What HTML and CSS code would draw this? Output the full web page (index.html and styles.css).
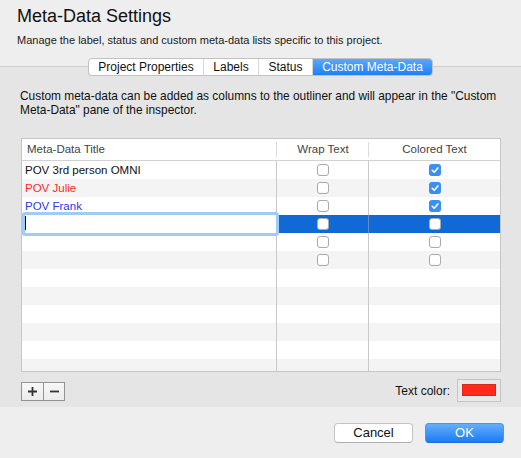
FILE: index.html
```html
<!DOCTYPE html>
<html>
<head>
<meta charset="utf-8">
<link rel="stylesheet" href="styles.css">
</head>
<body>
<div class="window">
  <header class="head">
    <h1 class="title">Meta-Data Settings</h1>
    <p class="subtitle">Manage the label, status and custom meta-data lists specific to this project.</p>
  </header>
  <div class="tabrow">
    <div class="tabs">
      <div class="tab tab-props">Project Properties</div>
      <div class="tab tab-labels">Labels</div>
      <div class="tab tab-status">Status</div>
      <div class="tab tab-custom active">Custom Meta-Data</div>
    </div>
  </div>
  <main class="panel">
    <p class="desc">Custom meta-data can be added as columns to the outliner and will appear in the "Custom Meta-Data" pane of the inspector.</p>
    <div class="table">
      <div class="thead">
        <div class="hcell hleft">Meta-Data Title</div>
        <div class="hcell">Wrap Text</div>
        <div class="hcell hlast">Colored Text</div>
      </div>
      <div class="tbody">
        <div class="row">
          <div class="cell c1">POV 3rd person OMNI</div>
          <div class="cell c2"><span class="cb"></span></div>
          <div class="cell c3"><span class="cb checked"><svg viewBox="0 0 12 12" width="12" height="12"><path d="M3.2 6.3 L5.2 8.3 L8.9 3.9" fill="none" stroke="#fff" stroke-width="1.6" stroke-linecap="round" stroke-linejoin="round"/></svg></span></div>
        </div>
        <div class="row">
          <div class="cell c1 red">POV Julie</div>
          <div class="cell c2"><span class="cb"></span></div>
          <div class="cell c3"><span class="cb checked"><svg viewBox="0 0 12 12" width="12" height="12"><path d="M3.2 6.3 L5.2 8.3 L8.9 3.9" fill="none" stroke="#fff" stroke-width="1.6" stroke-linecap="round" stroke-linejoin="round"/></svg></span></div>
        </div>
        <div class="row">
          <div class="cell c1 blue">POV Frank</div>
          <div class="cell c2"><span class="cb"></span></div>
          <div class="cell c3"><span class="cb checked"><svg viewBox="0 0 12 12" width="12" height="12"><path d="M3.2 6.3 L5.2 8.3 L8.9 3.9" fill="none" stroke="#fff" stroke-width="1.6" stroke-linecap="round" stroke-linejoin="round"/></svg></span></div>
        </div>
        <div class="row selected">
          <div class="cell c1 editcell"><div class="editor"><span class="caret"></span></div></div>
          <div class="cell c2"><span class="cb"></span></div>
          <div class="cell c3"><span class="cb"></span></div>
        </div>
        <div class="row">
          <div class="cell c1"></div>
          <div class="cell c2"><span class="cb"></span></div>
          <div class="cell c3"><span class="cb"></span></div>
        </div>
        <div class="row">
          <div class="cell c1"></div>
          <div class="cell c2"><span class="cb"></span></div>
          <div class="cell c3"><span class="cb"></span></div>
        </div>
        <div class="row"><div class="cell c1"></div><div class="cell c2"></div><div class="cell c3"></div></div>
        <div class="row"><div class="cell c1"></div><div class="cell c2"></div><div class="cell c3"></div></div>
        <div class="row"><div class="cell c1"></div><div class="cell c2"></div><div class="cell c3"></div></div>
        <div class="row"><div class="cell c1"></div><div class="cell c2"></div><div class="cell c3"></div></div>
        <div class="row"><div class="cell c1"></div><div class="cell c2"></div><div class="cell c3"></div></div>
        <div class="row"><div class="cell c1"></div><div class="cell c2"></div><div class="cell c3"></div></div>
      </div>
    </div>
    <div class="controls">
      <div class="pm">
        <div class="pmbtn"><svg viewBox="0 0 9 9" width="9" height="9"><path d="M4.5 0 V9 M0 4.5 H9" stroke="#333" stroke-width="1.8"/></svg></div>
        <div class="pmbtn pmminus"><svg viewBox="0 0 9 9" width="9" height="9"><path d="M0 4.5 H9" stroke="#333" stroke-width="1.8"/></svg></div>
      </div>
      <div class="colorpick">
        <span class="clabel">Text color:</span>
        <div class="swatch"><div class="swatch-inner"></div></div>
      </div>
    </div>
  </main>
  <footer class="foot">
    <button class="btn">Cancel</button>
    <button class="btn primary">OK</button>
  </footer>
</div>
</body>
</html>
```

FILE: styles.css
```css
* { box-sizing: border-box; }
html, body { margin: 0; padding: 0; }
body {
  width: 521px;
  height: 458px;
  overflow: hidden;
  background: #eeeeee;
  font-family: "Liberation Sans", Arial, sans-serif;
  color: #111;
}
.window { width: 521px; height: 458px; display: flex; flex-direction: column; }

.head { padding: 6px 17px 0 17px; }
.title { margin: 0; font-size: 18px; font-weight: normal; line-height: 20px; color: #111; }
.subtitle { margin: 8px 0 0 0; font-size: 11px; line-height: 13px; color: #1a1a1a; }

.tabrow {
  margin-top: 11px;
  height: 18px;
  display: flex;
  justify-content: center;
  background: linear-gradient(#eeeeee 0 8px, #cfcfcf 8px 9px, #e5e5e5 9px);
}
.tabs {
  display: flex;
  height: 18px;
  border: 1px solid #c2c2c2;
  border-radius: 4px;
  background: #fff;
  overflow: hidden;
  box-shadow: 0 0.5px 0.5px rgba(0,0,0,0.08);
}
.tab {
  font-size: 12px;
  line-height: 16px;
  text-align: center;
  color: #111;
  border-right: 1px solid #d6d6d6;
}
.tab-props { width: 115px; }
.tab-labels { width: 55px; }
.tab-status { width: 54px; }
.tab-custom { width: 119px; border-right: none; }
.tab.active {
  color: #fff;
  background: linear-gradient(#5aa9fc, #1f7ff5);
}

.panel {
  background: #e5e5e5;
  padding: 13px 20px 5px 21px;
  flex: 0 0 auto;
}
.desc { margin: 0 0 0 -1px; font-size: 11.9px; line-height: 14px; color: #111; }

.table {
  margin-top: 21px;
  width: 480px;
  border: 1px solid #c6c6c6;
  background: #fff;
}
.thead {
  display: grid;
  grid-template-columns: 255px 92px 131px;
  height: 22px;
  border-bottom: 1px solid #d2d2d2;
}
.hcell {
  font-size: 11.5px;
  line-height: 21px;
  color: #444;
  text-align: center;
  background: linear-gradient(#dcdcdc, #dcdcdc) right 0 top 3px / 1px 15px no-repeat;
}
.hleft { text-align: left; padding-left: 5px; }
.hlast { background: none; }

.tbody { height: 210px; overflow: hidden; }
.row {
  display: grid;
  grid-template-columns: 255px 92px 131px;
  height: 18px;
}
.row:nth-child(even) { background: #f4f4f4; }
.cell {
  border-right: 1px solid #c9c9c9;
  font-size: 11.5px;
  line-height: 18px;
  display: flex;
  align-items: center;
}
.c1 { padding-left: 3px; }
.c2, .c3 { justify-content: center; }
.c3 { border-right: none; }
.red { color: #fc2a22; }
.blue { color: #2b37f2; }

.row.selected { background: #f4f4f4; }
.row.selected .c2, .row.selected .c3 { background: #1169d5; }
.row.selected .c2 { border-right-color: #5b8fd0; }
.editcell { position: relative; padding: 0; border-right-color: #c9c9c9; }
.editor {
  position: absolute;
  left: 0;
  top: -3px;
  right: -3px;
  bottom: -3px;
  z-index: 2;
  border: 3px solid #9fcbf7;
  border-radius: 3px;
  background: #fff;
  padding: 1px 0 0 0;
}
.caret { display: block; width: 1px; height: 14px; background: #000; }

.cb {
  width: 12px;
  height: 12px;
  border: 1px solid #ababab;
  border-radius: 3px;
  background: #fff;
  display: block;
  box-shadow: inset 0 -0.5px 0 rgba(0,0,0,0.05);
}
.cb.checked {
  border: none;
  background: #3a8ff6;
}
.cb svg { display: block; }

.controls {
  margin-top: 7px;
  height: 23px;
  display: flex;
  align-items: center;
  justify-content: space-between;
}
.pm {
  display: flex;
  height: 19px;
  border: 1px solid #939393;
  margin-top: 1px;
}
.pmbtn {
  width: 21px;
  height: 17px;
  display: flex;
  align-items: center;
  justify-content: center;
  background: linear-gradient(#f7f7f7, #ececec);
}
.pmminus { border-left: 1px solid #939393; width: 21px; }
.pmbtn svg { display: block; }

.colorpick { display: flex; align-items: center; }
.clabel { font-size: 12px; color: #111; margin-right: 7px; margin-top: 1px; }
.swatch {
  width: 44px;
  height: 23px;
  border: 1px solid #c4c4c4;
  background: #e9e9e9;
  padding: 4px 4px 5px 4px;
}
.swatch-inner {
  width: 34px;
  height: 12px;
  background: #ff2a1a;
  border: 1px solid #d8281c;
}

.foot {
  flex: 1;
  display: flex;
  justify-content: flex-end;
  align-items: flex-start;
  gap: 12px;
  padding: 16px 17px 0 0;
  background: #eeeeee;
}
.btn {
  width: 79px;
  height: 20px;
  margin: 0;
  padding: 0;
  font-family: "Liberation Sans", Arial, sans-serif;
  font-size: 13px;
  line-height: 18px;
  color: #111;
  background: #fff;
  border: 1px solid #c4c4c4;
  border-bottom-color: #aeaeae;
  border-radius: 4px;
}
.btn.primary {
  color: #fff;
  background: linear-gradient(#64aefc, #1b7cf4);
  border-color: #4a95f2;
  border-bottom-color: #1a6fe0;
}
```
